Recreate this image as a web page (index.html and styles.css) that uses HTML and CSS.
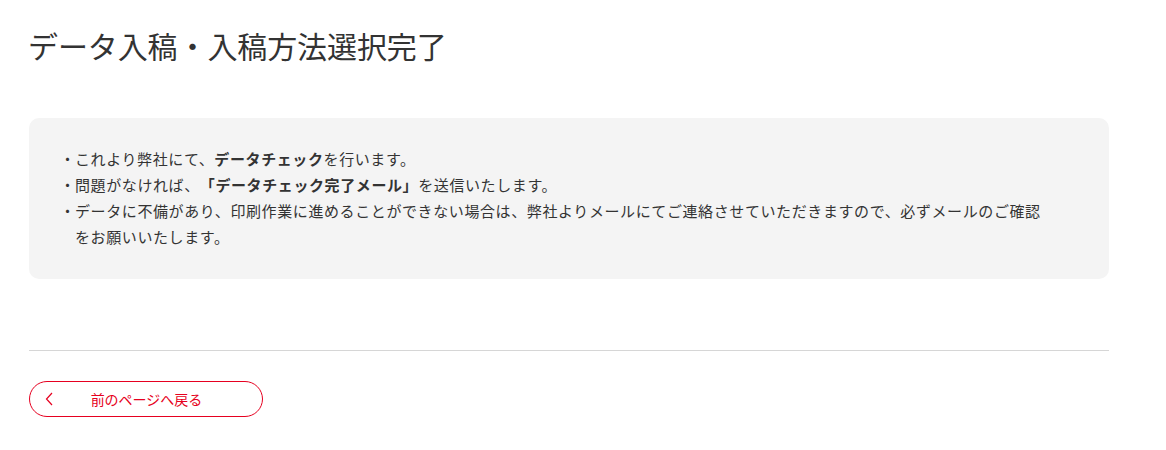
FILE: index.html
```html
<!DOCTYPE html>
<html lang="ja">
<head>
<meta charset="utf-8">
<title>データ入稿・入稿方法選択完了</title>
<link rel="stylesheet" href="styles.css">
</head>
<body>
<main class="page">
  <h1 class="title">データ入稿・入稿方法選択完了</h1>
  <section class="notice">
    <ul class="notice-list">
      <li>これより弊社にて、<strong>データチェック</strong>を行います。</li>
      <li>問題がなければ、<strong>「データチェック完了メール」</strong>を送信いたします。</li>
      <li>データに不備があり、印刷作業に進めることができない場合は、弊社よりメールにてご連絡させていただきますので、必ずメールのご確認をお願いいたします。</li>
    </ul>
  </section>
  <hr class="divider">
  <a class="back-btn" href="#">
    <svg class="chev" width="8" height="14" viewBox="0 0 8 14" aria-hidden="true"><path d="M7 1 L1.5 7 L7 13" fill="none" stroke="currentColor" stroke-width="1.2"/></svg>
    <span class="back-label">前のページへ戻る</span>
  </a>
</main>
</body>
</html>
```

FILE: styles.css
```css
* { box-sizing: border-box; }
html, body { margin: 0; padding: 0; background: #fff; }
body {
  font-family: "Noto Sans CJK JP", "Noto Sans", sans-serif;
  color: #333;
}
.page {
  width: 1080px;
  margin-left: 29px;
  padding-top: 24px;
}
.title {
  margin: 0 0 0 -1px;
  font-size: 30px;
  font-weight: 400;
  line-height: 42px;
  color: #333;
  letter-spacing: -0.1px;
}
.notice {
  margin-top: 52px;
  background: #f4f4f4;
  border-radius: 10px;
  padding: 28px 60px 29px 31px;
}
.notice-list {
  list-style: none;
  margin: 0;
  padding: 0;
  font-size: 15px;
  line-height: 26px;
  letter-spacing: 0.6px;
  color: #333;
  text-spacing-trim: space-all;
}
.notice-list li {
  padding-left: 15px;
  text-indent: -15px;
}
.notice-list li::before {
  content: "・";
  display: inline-block;
  width: 15px;
  text-indent: 0;
  letter-spacing: 0;
}
.notice-list strong { font-weight: 700; }
.divider {
  border: 0;
  border-top: 1px solid #d6d6d6;
  margin: 71px 0 0;
}
.back-btn {
  margin-top: 30px;
  display: flex;
  align-items: center;
  position: relative;
  width: 234px;
  height: 36px;
  border: 1px solid #e60020;
  border-radius: 18px;
  color: #e60020;
  text-decoration: none;
  font-size: 14px;
}
.chev {
  position: absolute;
  left: 15px;
  top: 10px;
}
.back-label {
  flex: 1;
  text-align: center;
  padding-left: 1px;
}
```
